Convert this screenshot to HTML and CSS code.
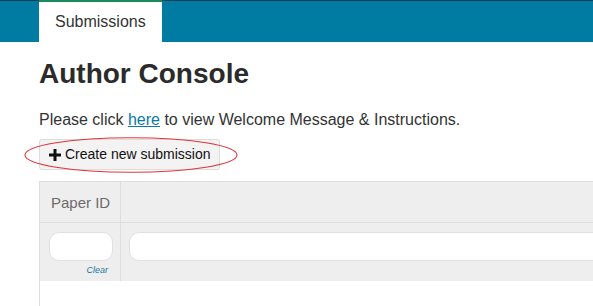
FILE: index.html
```html
<!DOCTYPE html>
<html>
<head>
<meta charset="utf-8">
<link rel="stylesheet" href="styles.css">
</head>
<body>
<header class="topbar">
  <nav class="tabs">
    <a class="tab active">Submissions</a>
  </nav>
</header>
<main class="content">
  <h1 class="title">Author Console</h1>
  <p class="intro">Please click <a class="link" href="#">here</a> to view Welcome Message &amp; Instructions.</p>
  <div class="btn-wrap">
    <button class="btn">
      <svg class="plus" width="12" height="12" viewBox="0 0 12 12"><rect x="4.5" y="0" width="3" height="12" fill="#111"/><rect x="0" y="4.5" width="12" height="3" fill="#111"/></svg>
      <span>Create new submission</span>
    </button>
    <svg class="mark" width="216" height="38" viewBox="0 0 216 38"><ellipse cx="108" cy="19" rx="106" ry="17.3" fill="none" stroke="#e0333a" stroke-width="1.1"/></svg>
  </div>
  <div class="grid">
    <div class="row head">
      <div class="cell c1">Paper ID</div>
      <div class="cell c2"></div>
    </div>
    <div class="row filters">
      <div class="cell c1">
        <div class="input small"></div>
        <div class="clear">Clear</div>
      </div>
      <div class="cell c2">
        <div class="input wide"></div>
      </div>
    </div>
    <div class="row body"></div>
  </div>
</main>
</body>
</html>
```
FILE: styles.css
```css
html, body {
  margin: 0;
  padding: 0;
  overflow: hidden;
  background: #fff;
  font-family: "Liberation Sans", Arial, sans-serif;
  color: #333;
}
.topbar {
  border-top: 1px solid #1d3b57;
  background: #007ca3;
  height: 41px;
}
.tabs {
  display: flex;
  padding-left: 39px;
}
.tab {
  margin-top: -1px;
  border-top: 2px solid #1b8a5c;
  background: #fff;
  height: 39px;
  box-sizing: content-box;
  padding: 1px 16px 0;
  font-size: 16px;
  line-height: 38px;
  color: #333;
}
.content {
  padding-left: 39px;
  width: 1100px;
}
.title {
  margin: 16px 0 0;
  font-size: 28px;
  line-height: 31px;
  font-weight: bold;
  color: #2b2b2b;
}
.intro {
  margin: 20px 0 0;
  font-size: 16px;
  line-height: 22px;
  color: #333;
}
.link {
  color: #0a7aa6;
  text-decoration: underline;
}
.btn-wrap {
  position: relative;
  margin-top: 8px;
  display: inline-block;
}
.btn {
  display: flex;
  align-items: center;
  gap: 4px;
  height: 31px;
  box-sizing: border-box;
  margin: 0;
  padding: 0 8px 0 9px;
  border: 1px solid #dcdcdc;
  border-radius: 3px;
  background: #f3f3f3;
  font-family: "Liberation Sans", Arial, sans-serif;
  font-size: 14px;
  line-height: 29px;
  color: #111;
}
.plus {
  display: block;
}
.mark {
  position: absolute;
  left: -16px;
  top: -3px;
  pointer-events: none;
}
.grid {
  margin-top: 11px;
  border: 1px solid #dddddd;
  border-right: none;
}
.row {
  display: flex;
}
.head {
  background: #eeeeee;
  border-bottom: 1px solid #dddddd;
}
.head .cell {
  height: 40px;
  box-sizing: border-box;
  padding: 10px 0 8px 11px;
  font-size: 15px;
  line-height: 22px;
  color: #6b6b6b;
  white-space: nowrap;
}
.cell.c1 {
  width: 81px;
  flex: none;
  box-sizing: border-box;
  border-right: 1px solid #dddddd;
}
.cell.c2 {
  flex: 1;
}
.filters {
  background: #eeeeee;
}
.filters .cell {
  height: 58px;
  box-sizing: border-box;
  padding: 9px 7px 0 9px;
}
.filters .cell.c2 {
  padding-left: 8px;
}
.input {
  height: 29px;
  box-sizing: border-box;
  background: #fff;
  border: 1px solid #e0e0e0;
  border-radius: 10px;
}
.input.small {
  width: 64px;
}
.clear {
  margin-top: 3px;
  text-align: right;
  font-size: 9px;
  line-height: 12px;
  font-style: italic;
  color: #1a78a0;
  padding-right: 5px;
}
.body {
  height: 40px;
  background: #fff;
}
```
